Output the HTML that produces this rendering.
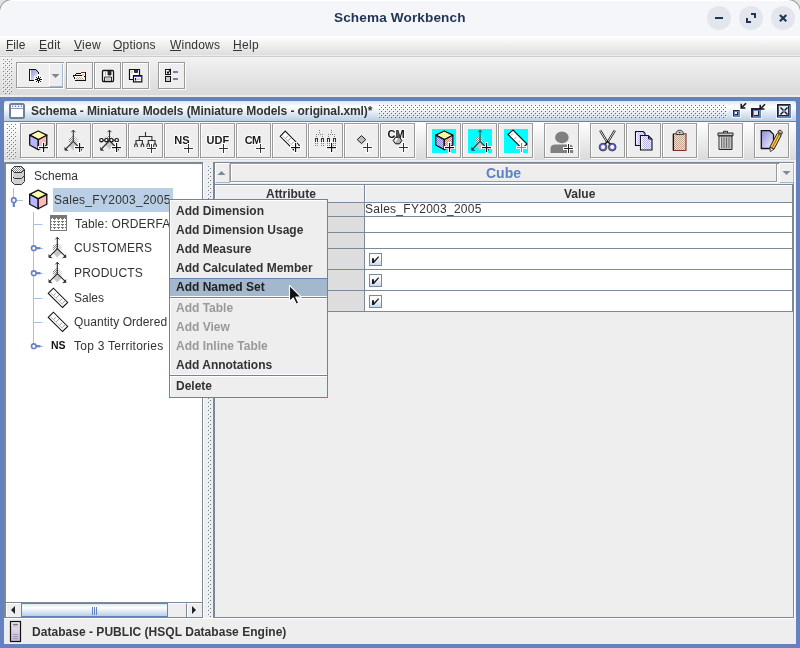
<!DOCTYPE html>
<html><head><meta charset="utf-8">
<style>
*{box-sizing:border-box;margin:0;padding:0}
html,body{width:800px;height:648px;overflow:hidden;background:#6382BF}
body{position:relative;font-family:"Liberation Sans",sans-serif;font-size:12px;color:#333}
.a{position:absolute}
.t{position:absolute;white-space:pre;line-height:1;will-change:transform}
svg{position:absolute;overflow:visible;will-change:transform}
/* window title */
#title{left:-1px;top:-1px;width:802px;height:37px;background:#F4F6FA;border-radius:13px 13px 0 0;border:1px solid #9A9A9A;border-bottom:0;box-shadow:inset 0 1px 0 #fff}
#menubar{left:0;top:36px;width:800px;height:19px;background:linear-gradient(#FFFFFF,#DDDDDD)}
#mtb{left:0;top:57px;width:800px;height:38px;background:linear-gradient(#F2F2F2,#DADADA)}
.tbtn{position:absolute;border:1px solid #999;box-shadow:1px 1px 0 #fff inset,1px 1px 0 #fff;background:#EEEEEE}
.bumps{position:absolute;background-image:radial-gradient(circle at 0.5px 0.5px,#6F8297 0.8px,transparent 0.9px);}
.menu{font-size:12px;color:#333}
.mu{position:absolute;height:1px;background:#333}
</style></head>
<body>
<!-- corners of window: outer area -->
<div class="a" style="left:0;top:0;width:800px;height:97px;background:#EEEEEE"></div>
<div class="a" style="left:0;top:0;width:800px;height:20px;background:#E2E2E2"></div>
<div class="a" id="title"></div>
<div class="t" style="left:334px;top:11px;font-size:13.6px;font-weight:700;color:#1F3553;letter-spacing:0.12px">Schema Workbench</div>
<!-- window buttons -->
<div class="a" style="left:707px;top:6px;width:24px;height:24px;border-radius:12px;background:#E3E6ED"></div>
<div class="a" style="left:739px;top:6px;width:24px;height:24px;border-radius:12px;background:#E3E6ED"></div>
<div class="a" style="left:771px;top:6px;width:24px;height:24px;border-radius:12px;background:#E3E6ED"></div>
<div class="a" style="left:715px;top:17px;width:8px;height:2px;background:#1D3556"></div>
<svg style="left:739px;top:6px" width="24" height="24"><path d="M12 8H16V12M8 12V16H12" fill="none" stroke="#1D3556" stroke-width="2"/></svg>
<svg style="left:771px;top:6px" width="24" height="24"><path d="M8.9 8.9L15.3 15.3M15.3 8.9L8.9 15.3" fill="none" stroke="#1D3556" stroke-width="2.1"/></svg>

<!-- menubar -->
<div class="a" id="menubar"></div>
<div class="a" style="left:0;top:55px;width:800px;height:1px;background:#ECECEC"></div>
<div class="a" style="left:0;top:56px;width:800px;height:1px;background:#CCCCCC"></div>
<div class="t menu" style="left:6px;top:39px">File</div>
<div class="t menu" style="left:39px;top:39px;letter-spacing:0.25px">Edit</div>
<div class="t menu" style="left:74px;top:39px;letter-spacing:0.3px">View</div>
<div class="t menu" style="left:113px;top:39px;letter-spacing:0.2px">Options</div>
<div class="t menu" style="left:170px;top:39px;letter-spacing:0.2px">Windows</div>
<div class="t menu" style="left:233px;top:39px;letter-spacing:0.3px">Help</div>

<div class="a" style="left:6px;top:50px;width:7px;height:1px;background:#333"></div>
<div class="a" style="left:39px;top:50px;width:8px;height:1px;background:#333"></div>
<div class="a" style="left:74px;top:50px;width:8px;height:1px;background:#333"></div>
<div class="a" style="left:113px;top:50px;width:9px;height:1px;background:#333"></div>
<div class="a" style="left:170px;top:50px;width:11px;height:1px;background:#333"></div>
<div class="a" style="left:233px;top:50px;width:9px;height:1px;background:#333"></div>
<!-- main toolbar -->
<div class="a" id="mtb"></div>
<div class="a" style="left:0;top:95px;width:800px;height:2px;background:#ECECEC"></div>
<svg style="left:0;top:0" width="800" height="648">
<defs>
<pattern id="bmpA" x="2" y="58" width="4" height="4" patternUnits="userSpaceOnUse"><rect x="0" y="0" width="1" height="1" fill="#fff"/><rect x="2" y="2" width="1" height="1" fill="#fff"/><rect x="1" y="1" width="1" height="1" fill="#6E7F91"/><rect x="3" y="3" width="1" height="1" fill="#6E7F91"/></pattern>
<pattern id="bmpB" x="6" y="123" width="4" height="4" patternUnits="userSpaceOnUse"><rect x="0" y="0" width="1" height="1" fill="#fff"/><rect x="2" y="2" width="1" height="1" fill="#fff"/><rect x="1" y="1" width="1" height="1" fill="#6E7F91"/><rect x="3" y="3" width="1" height="1" fill="#6E7F91"/></pattern>
<pattern id="bmpC" x="378" y="104" width="4" height="4" patternUnits="userSpaceOnUse"><rect x="0" y="0" width="1" height="1" fill="#fff"/><rect x="2" y="2" width="1" height="1" fill="#fff"/><rect x="1" y="1" width="1" height="1" fill="#5A677A"/><rect x="3" y="3" width="1" height="1" fill="#5A677A"/></pattern>
</defs>
</svg>

<svg style="left:0;top:0" width="800" height="100"><rect x="2" y="58" width="10" height="36" fill="url(#bmpA)"/></svg>
<!-- combo new -->
<div class="a" style="left:16px;top:62px;width:48px;height:26px;border:1px solid #999;border-right-color:#999;background:#EEEEEE;box-shadow:inset 1px 1px 0 #fff"></div>
<div class="a" style="left:17px;top:63px;width:47px;height:26px;border:1px solid #fff;border-width:0 1px 1px 0"></div>
<div class="a" style="left:49px;top:63px;width:14px;height:24px;background:#EEEEEE;border-left:1px solid #fff;border-top:1px solid #fff;border-right:1px solid #A3B8CC;border-bottom:1px solid #A3B8CC"></div>
<svg style="left:0;top:0" width="100" height="100"><path d="M51.5 74h8l-4 4z" fill="#7A8A99"/></svg>
<div class="tbtn" style="left:66px;top:62px;width:27px;height:27px"></div>
<div class="tbtn" style="left:94px;top:62px;width:27px;height:27px"></div>
<div class="tbtn" style="left:122px;top:62px;width:27px;height:27px"></div>
<div class="tbtn" style="left:158px;top:62px;width:27px;height:27px"></div>


<!-- blue internal frame area -->
<div class="a" style="left:0;top:97px;width:800px;height:551px;background:#6382BF"></div>
<!-- internal title -->
<div class="a" style="left:4px;top:101px;width:792px;height:20px;border-radius:2px 2px 0 0;background:linear-gradient(#DDE8F3 0%,#FFFFFF 30%,#B8CFE5 100%)"></div>
<div class="a" style="left:4px;top:121px;width:792px;height:1px;background:#6382BF"></div>
<div class="t" style="left:31px;top:105px;font-size:12px;font-weight:700;color:#333;letter-spacing:-0.09px">Schema - Miniature Models (Miniature Models - original.xml)*</div>

<!-- internal frame title icon & buttons -->
<svg style="left:0;top:0" width="800" height="125">
<rect x="10" y="104" width="14" height="14" rx="1.5" fill="#fff" stroke="#6F8093" stroke-width="2"/>
<path d="M11 108.5H23" stroke="#8C9AAA" stroke-width="1"/>
<circle cx="12.8" cy="106.3" r="0.8" fill="#4A6CC0"/><circle cx="15.6" cy="106.3" r="0.8" fill="#4A6CC0"/><circle cx="18.5" cy="106.3" r="0.8" fill="#4A6CC0"/><circle cx="21.4" cy="106.3" r="0.8" fill="#4A6CC0"/>
<!-- iconify -->
<rect x="732" y="109" width="9" height="9" fill="#fff" opacity="0.7"/>
<rect x="733" y="110" width="7" height="7" fill="#6382BF"/>
<rect x="733" y="110" width="6" height="1" fill="#222"/><rect x="733" y="110" width="1" height="6" fill="#222"/>
<rect x="735" y="112" width="3" height="3" fill="#222"/><rect x="735" y="112" width="2" height="2" fill="#fff"/>
<path d="M746 103.3L742 107.3" stroke="#111" stroke-width="1.6"/><path d="M741.2 103.8V108H745.4" fill="none" stroke="#111" stroke-width="1.5"/>
<!-- maximize -->
<rect x="750" y="107" width="12" height="12" fill="#fff" opacity="0.7"/>
<rect x="751" y="108" width="10" height="10" fill="#6382BF"/>
<rect x="751" y="108" width="9" height="2" fill="#222"/><rect x="751" y="108" width="2" height="9" fill="#222"/>
<rect x="754" y="111" width="5" height="5" fill="#222"/><rect x="754" y="111" width="4" height="4" fill="#DCE6F2"/>
<path d="M765 104.3L761 108.3" stroke="#111" stroke-width="1.6"/><path d="M760.2 104.8V109H764.4" fill="none" stroke="#111" stroke-width="1.5"/>
<!-- close -->
<rect x="776" y="103" width="16" height="16" fill="#fff" opacity="0.7"/>
<rect x="777" y="104" width="14" height="14" fill="#6382BF"/>
<rect x="777" y="104" width="13" height="1.5" fill="#222"/><rect x="777" y="104" width="1.5" height="13" fill="#222"/>
<rect x="779" y="106" width="10" height="10" fill="#222"/><rect x="779" y="106" width="9" height="9" fill="#E8EEF6"/>
<path d="M780.5 107.5L787.5 114.5M787.5 107.5L780.5 114.5" stroke="#111" stroke-width="1.4"/>
<path d="M783 110l2 2M785 110l-2 2" stroke="#6382BF" stroke-width="1"/>
</svg>
<!-- internal toolbar -->
<div class="a" style="left:4px;top:122px;width:792px;height:38px;background:linear-gradient(#FFFFFF,#DADADA)"></div>
<div class="a" style="left:4px;top:160px;width:792px;height:1px;background:#EFEFEF"></div>
<div class="a" style="left:4px;top:161px;width:792px;height:1px;background:#E6E6E6"></div>


<svg style="left:0;top:0" width="800" height="200"><rect x="378" y="104" width="349" height="14" fill="url(#bmpC)"/><rect x="6" y="123" width="10" height="36" fill="url(#bmpB)"/></svg>
<div class="tbtn" style="left:20px;top:123px;width:35px;height:35px"></div>
<div class="tbtn" style="left:56px;top:123px;width:35px;height:35px"></div>
<div class="tbtn" style="left:92px;top:123px;width:35px;height:35px"></div>
<div class="tbtn" style="left:128px;top:123px;width:35px;height:35px"></div>
<div class="tbtn" style="left:164px;top:123px;width:35px;height:35px"></div>
<div class="tbtn" style="left:200px;top:123px;width:35px;height:35px"></div>
<div class="tbtn" style="left:236px;top:123px;width:35px;height:35px"></div>
<div class="tbtn" style="left:272px;top:123px;width:35px;height:35px"></div>
<div class="tbtn" style="left:308px;top:123px;width:35px;height:35px"></div>
<div class="tbtn" style="left:344px;top:123px;width:35px;height:35px"></div>
<div class="tbtn" style="left:380px;top:123px;width:35px;height:35px"></div>
<div class="tbtn" style="left:426px;top:123px;width:35px;height:35px"></div>
<div class="tbtn" style="left:462px;top:123px;width:35px;height:35px"></div>
<div class="tbtn" style="left:498px;top:123px;width:35px;height:35px"></div>
<div class="tbtn" style="left:544px;top:123px;width:35px;height:35px"></div>
<div class="tbtn" style="left:590px;top:123px;width:35px;height:35px"></div>
<div class="tbtn" style="left:626px;top:123px;width:35px;height:35px"></div>
<div class="tbtn" style="left:662px;top:123px;width:35px;height:35px"></div>
<div class="tbtn" style="left:708px;top:123px;width:35px;height:35px"></div>
<div class="tbtn" style="left:754px;top:123px;width:35px;height:35px"></div>
<!-- ICONS -->
<svg style="left:0;top:0" width="800" height="170">
<defs><pattern id="hY" width="2" height="2" patternUnits="userSpaceOnUse"><rect width="2" height="2" fill="#FFFFB0"/><rect width="1" height="1" fill="#E8E890"/></pattern><pattern id="hB" width="2" height="2" patternUnits="userSpaceOnUse"><rect width="2" height="2" fill="#C8C8FF"/><rect width="1" height="1" fill="#8888DD"/><rect x="1" y="1" width="1" height="1" fill="#8888DD"/></pattern><pattern id="hR" width="2" height="2" patternUnits="userSpaceOnUse"><rect width="2" height="2" fill="#FFC8C8"/><rect width="1" height="1" fill="#DD8888"/><rect x="1" y="1" width="1" height="1" fill="#DD8888"/></pattern><pattern id="hL" width="2" height="2" patternUnits="userSpaceOnUse"><rect width="2" height="2" fill="#F2F2FC"/><rect width="1" height="1" fill="#B4B4E4"/><rect x="1" y="1" width="1" height="1" fill="#B4B4E4"/></pattern><pattern id="hT" width="2" height="2" patternUnits="userSpaceOnUse"><rect width="2" height="2" fill="#EADFD2"/><rect width="1" height="1" fill="#C4A890"/><rect x="1" y="1" width="1" height="1" fill="#C4A890"/></pattern><linearGradient id="gL" x1="0" y1="0" x2="1" y2="1"><stop offset="0" stop-color="#8C8CD8"/><stop offset="1" stop-color="#F4F4FF"/></linearGradient></defs>
<g stroke="#111" stroke-width="1.3" stroke-linejoin="round"><path d="M38.3 131L46.8 135.2L38.3 139.7L29.699999999999996 135.2z" fill="#FFFFB0"/><path d="M29.699999999999996 135.2L38.3 139.7V149.6L29.699999999999996 145z" fill="#B8B8FF"/><path d="M46.8 135.2L38.3 139.7V149.6L46.8 145z" fill="#FFB8B8"/></g><rect x="38" y="146" width="11" height="3" fill="#fff"/><rect x="42" y="142" width="3" height="11" fill="#fff"/><rect x="39" y="147" width="9" height="1" fill="#111"/><rect x="43" y="143" width="1" height="9" fill="#111"/><rect x="39" y="147" width="9" height="1" fill="#111" opacity="0.35" transform="translate(0,0.5)"/><rect x="43" y="143" width="1" height="9" fill="#111" opacity="0.35" transform="translate(0.5,0)"/><path d="M73.3 141.3L68.8 143.20000000000002V138.60000000000002L73.3 135.5z" fill="url(#hatch)"/><path d="M73.3 141.3L77.8 143.20000000000002V138.60000000000002L73.3 135.5z" fill="url(#hatch)" opacity="0.45"/><path d="M73.3 141.3l4.3 4.3l-4.3 4.8l-4.3-4.8z" fill="#C8C8C8"/><path d="M73.3 141.3V130.2M73.3 141.3L64.8 150M73.3 141.3L81.8 150" stroke="#333" stroke-width="1.1" fill="none"/><path d="M71.3 132.2l2-2l2 2" stroke="#333" stroke-width="1" fill="none"/><path d="M64.3 146.7l0.5 3.7l3.7 0.5z M82.3 146.7l-0.5 3.7l-3.7 0.5z" fill="#333"/><rect x="74" y="146" width="11" height="3" fill="#fff"/><rect x="78" y="142" width="3" height="11" fill="#fff"/><rect x="75" y="147" width="9" height="1" fill="#111"/><rect x="79" y="143" width="1" height="9" fill="#111"/><rect x="75" y="147" width="9" height="1" fill="#111" opacity="0.35" transform="translate(0,0.5)"/><rect x="79" y="143" width="1" height="9" fill="#111" opacity="0.35" transform="translate(0.5,0)"/><path d="M109.5 140.5L105.0 142.4V137.8L109.5 134.7z" fill="url(#hatch)"/><path d="M109.5 140.5L114.0 142.4V137.8L109.5 134.7z" fill="url(#hatch)" opacity="0.45"/><path d="M109.5 140.5l4.3 4.3l-4.3 4.8l-4.3-4.8z" fill="#C8C8C8"/><path d="M109.5 140.5V130.2M109.5 140.5L100.5 150M109.5 140.5L118.5 150" stroke="#333" stroke-width="1.1" fill="none"/><path d="M107.5 132.2l2-2l2 2" stroke="#333" stroke-width="1" fill="none"/><path d="M100.0 146.7l0.5 3.7l3.7 0.5z M119.0 146.7l-0.5 3.7l-3.7 0.5z" fill="#333"/><path d="M101.4 140.2H116.7" stroke="#111" stroke-width="1"/><circle cx="101.4" cy="140.2" r="1.7" fill="#fff" stroke="#111" stroke-width="1.2"/><circle cx="106.4" cy="140.2" r="1.7" fill="#fff" stroke="#111" stroke-width="1.2"/><circle cx="111.4" cy="140.2" r="1.7" fill="#fff" stroke="#111" stroke-width="1.2"/><circle cx="116.7" cy="140.2" r="1.7" fill="#fff" stroke="#111" stroke-width="1.2"/><rect x="111" y="146" width="11" height="3" fill="#fff"/><rect x="115" y="142" width="3" height="11" fill="#fff"/><rect x="112" y="147" width="9" height="1" fill="#111"/><rect x="116" y="143" width="1" height="9" fill="#111"/><rect x="112" y="147" width="9" height="1" fill="#111" opacity="0.35" transform="translate(0,0.5)"/><rect x="116" y="143" width="1" height="9" fill="#111" opacity="0.35" transform="translate(0.5,0)"/><g stroke="#333" stroke-width="1.1" fill="none"><path d="M145.5 132V136.5M139.3 140.5V136.5H151.9V140.5M136 144V140.5H142.4V144M148.3 144V140.5H155V144"/><path d="M134.7 147V145.2a1.3 1.3 0 0 1 2.6 0V147"/><path d="M141.1 147V145.2a1.3 1.3 0 0 1 2.6 0V147"/><path d="M147.0 147V145.2a1.3 1.3 0 0 1 2.6 0V147"/><path d="M153.7 147V145.2a1.3 1.3 0 0 1 2.6 0V147"/></g><rect x="146" y="147" width="11" height="3" fill="#fff"/><rect x="150" y="143" width="3" height="11" fill="#fff"/><rect x="147" y="148" width="9" height="1" fill="#333"/><rect x="151" y="144" width="1" height="9" fill="#333"/><text x="174.2" y="144" font-family="Liberation Sans" font-weight="700" font-size="11" fill="#1a1a1a" stroke="#fff" stroke-width="1.6" paint-order="stroke">NS</text><rect x="183" y="147" width="11" height="3" fill="#fff"/><rect x="187" y="143" width="3" height="11" fill="#fff"/><rect x="184" y="148" width="9" height="1" fill="#333"/><rect x="188" y="144" width="1" height="9" fill="#333"/><text x="206.6" y="144" font-family="Liberation Sans" font-weight="700" font-size="11" fill="#1a1a1a" stroke="#fff" stroke-width="1.6" paint-order="stroke">UDF</text><rect x="218" y="147" width="11" height="3" fill="#fff"/><rect x="222" y="143" width="3" height="11" fill="#fff"/><rect x="219" y="148" width="9" height="1" fill="#333"/><rect x="223" y="144" width="1" height="9" fill="#333"/><text x="244.8" y="144" font-family="Liberation Sans" font-weight="700" font-size="11" fill="#1a1a1a" stroke="#fff" stroke-width="1.6" paint-order="stroke" textLength="16.4">CM</text><rect x="255" y="147" width="11" height="3" fill="#fff"/><rect x="259" y="143" width="3" height="11" fill="#fff"/><rect x="256" y="148" width="9" height="1" fill="#333"/><rect x="260" y="144" width="1" height="9" fill="#333"/><path d="M280.10 136.30L285.20 131.10L299.50 145.40L294.30 150.40z" fill="#fff" stroke="#fff" stroke-width="2.6"/><path d="M280.10 136.30L285.20 131.10L299.50 145.40L294.30 150.40z" fill="#fff" stroke="#111" stroke-width="1.05"/><path d="M282.60 135.90L294.40 147.50" stroke="#888" stroke-width="0.9" stroke-dasharray="1 0.6"/><path d="M285.60 138.40L287.60 136.20M288.00 140.80L290.80 137.90M291.80 143.90L293.80 141.80M294.10 146.30L296.80 143.70" stroke="#888" stroke-width="0.9"/><rect x="293" y="149" width="1" height="1" fill="#111"/><rect x="290" y="146" width="11" height="3" fill="#fff"/><rect x="294" y="142" width="3" height="11" fill="#fff"/><rect x="291" y="147" width="9" height="1" fill="#111"/><rect x="295" y="143" width="1" height="9" fill="#111"/><rect x="291" y="147" width="9" height="1" fill="#111" opacity="0.35" transform="translate(0,0.5)"/><rect x="295" y="143" width="1" height="9" fill="#111" opacity="0.35" transform="translate(0.5,0)"/><g fill="#808080"><rect x="319" y="130" width="1" height="1"/><rect x="319" y="132" width="1" height="1"/><rect x="316" y="134" width="1" height="1"/><rect x="318" y="134" width="1" height="1"/><rect x="320" y="134" width="1" height="1"/><rect x="322" y="134" width="1" height="1"/><rect x="316" y="136" width="1" height="1"/><rect x="322" y="136" width="1" height="1"/><rect x="315" y="143" width="1" height="1"/><rect x="317" y="143" width="1" height="1"/><rect x="315" y="145" width="1" height="1"/><rect x="317" y="145" width="1" height="1"/><rect x="321" y="143" width="1" height="1"/><rect x="323" y="143" width="1" height="1"/><rect x="321" y="145" width="1" height="1"/><rect x="323" y="145" width="1" height="1"/><rect x="331" y="130" width="1" height="1"/><rect x="331" y="132" width="1" height="1"/><rect x="328" y="134" width="1" height="1"/><rect x="330" y="134" width="1" height="1"/><rect x="332" y="134" width="1" height="1"/><rect x="334" y="134" width="1" height="1"/><rect x="328" y="136" width="1" height="1"/><rect x="334" y="136" width="1" height="1"/><rect x="327" y="143" width="1" height="1"/><rect x="329" y="143" width="1" height="1"/><rect x="327" y="145" width="1" height="1"/><rect x="329" y="145" width="1" height="1"/><rect x="333" y="143" width="1" height="1"/><rect x="335" y="143" width="1" height="1"/><rect x="333" y="145" width="1" height="1"/><rect x="335" y="145" width="1" height="1"/></g><g fill="#333"><rect x="315" y="138" width="3" height="1"/><rect x="315" y="139" width="1" height="3"/><rect x="317" y="139" width="1" height="3"/><rect x="321" y="138" width="3" height="1"/><rect x="321" y="139" width="1" height="3"/><rect x="323" y="139" width="1" height="3"/><rect x="327" y="138" width="3" height="1"/><rect x="327" y="139" width="1" height="3"/><rect x="329" y="139" width="1" height="3"/><rect x="333" y="138" width="3" height="1"/><rect x="333" y="139" width="1" height="3"/><rect x="335" y="139" width="1" height="3"/></g><rect x="326" y="146" width="11" height="3" fill="#fff"/><rect x="330" y="142" width="3" height="11" fill="#fff"/><rect x="327" y="147" width="9" height="1" fill="#111"/><rect x="331" y="143" width="1" height="9" fill="#111"/><rect x="327" y="147" width="9" height="1" fill="#111" opacity="0.35" transform="translate(0,0.5)"/><rect x="331" y="143" width="1" height="9" fill="#111" opacity="0.35" transform="translate(0.5,0)"/><path d="M361.5 135.6L365.8 139.6L361.5 143.6L357.2 139.6z" fill="#BBBBBB" stroke="#222" stroke-width="1" stroke-linejoin="round"/><rect x="362" y="146" width="11" height="3" fill="#fff"/><rect x="366" y="142" width="3" height="11" fill="#fff"/><rect x="363" y="147" width="9" height="1" fill="#333"/><rect x="367" y="143" width="1" height="9" fill="#333"/><text x="387.6" y="137.8" font-family="Liberation Sans" font-weight="700" font-size="11" fill="#111" stroke="#fff" stroke-width="1.4" paint-order="stroke">CM</text><path d="M395.5 137.2H399.5L401.8 140.5L399.5 143.8H395.5L393.2 140.5z" fill="#B4B4B4" stroke="#111" stroke-width="1" stroke-linejoin="round"/><path d="M395.8 138L398 138L396 141.5H394.2z" fill="#fff"/><path d="M397 130.5L399.3 137.5" stroke="#555" stroke-width="1.6"/><rect x="398" y="146" width="11" height="3" fill="#fff"/><rect x="402" y="142" width="3" height="11" fill="#fff"/><rect x="399" y="147" width="9" height="1" fill="#333"/><rect x="403" y="143" width="1" height="9" fill="#333"/><rect x="432" y="129" width="24" height="24" fill="#00FFFF"/><rect x="468" y="129" width="24" height="24" fill="#00FFFF"/><rect x="504" y="129" width="24" height="24" fill="#00FFFF"/><g stroke="#111" stroke-width="1.3" stroke-linejoin="round"><path d="M444.3 131L452.8 135.2L444.3 139.7L435.7 135.2z" fill="url(#hY)"/><path d="M435.7 135.2L444.3 139.7V149.6L435.7 145z" fill="url(#hB)"/><path d="M452.8 135.2L444.3 139.7V149.6L452.8 145z" fill="url(#hR)"/></g><rect x="444" y="146" width="11" height="3" fill="#fff"/><rect x="448" y="142" width="3" height="11" fill="#fff"/><rect x="445" y="147" width="9" height="1" fill="#111"/><rect x="449" y="143" width="1" height="9" fill="#111"/><rect x="445" y="147" width="9" height="1" fill="#111" opacity="0.35" transform="translate(0,0.5)"/><rect x="449" y="143" width="1" height="9" fill="#111" opacity="0.35" transform="translate(0.5,0)"/><path d="M480 141.3L475.5 143.20000000000002V138.60000000000002L480 135.5z" fill="url(#hatch)"/><path d="M480 141.3L484.5 143.20000000000002V138.60000000000002L480 135.5z" fill="url(#hatch)" opacity="0.45"/><path d="M480 141.3l4.3 4.3l-4.3 4.8l-4.3-4.8z" fill="#C8C8C8"/><path d="M480 141.3V130.2M480 141.3L471.5 150M480 141.3L488.5 150" stroke="#333" stroke-width="1.1" fill="none"/><path d="M478 132.2l2-2l2 2" stroke="#333" stroke-width="1" fill="none"/><path d="M471.0 146.7l0.5 3.7l3.7 0.5z M489.0 146.7l-0.5 3.7l-3.7 0.5z" fill="#333"/><rect x="481" y="146" width="11" height="3" fill="#fff"/><rect x="485" y="142" width="3" height="11" fill="#fff"/><rect x="482" y="147" width="9" height="1" fill="#111"/><rect x="486" y="143" width="1" height="9" fill="#111"/><rect x="482" y="147" width="9" height="1" fill="#111" opacity="0.35" transform="translate(0,0.5)"/><rect x="486" y="143" width="1" height="9" fill="#111" opacity="0.35" transform="translate(0.5,0)"/><path d="M508 134.5L513 130L527 144L522 148.5z" fill="#fff" stroke="#111" stroke-width="1.1"/><path d="M511 135.5l2-2M514.5 139l2-2M518 142.5l2-2" stroke="#999" stroke-width="0.9"/><rect x="516" y="146" width="11" height="3" fill="#fff"/><rect x="520" y="142" width="3" height="11" fill="#fff"/><rect x="517" y="147" width="9" height="1" fill="#888"/><rect x="521" y="143" width="1" height="9" fill="#888"/><ellipse cx="561.9" cy="137.4" rx="6.8" ry="5.8" fill="#808080"/><path d="M550.5 153V148.5Q550.5 144.5 555.5 144.5H568.5Q573.2 144.5 573.2 148.5V153z" fill="#808080"/><rect x="563" y="147" width="11" height="3" fill="#fff"/><rect x="567" y="143" width="3" height="11" fill="#fff"/><rect x="564" y="148" width="9" height="1" fill="#222"/><rect x="568" y="144" width="1" height="9" fill="#222"/><path d="M600.2 130.5L607.5 142.5M614.8 130.5L607.5 142.5" stroke="#111" stroke-width="2.4"/><path d="M600.2 130.5L607.5 142.5M614.8 130.5L607.5 142.5" stroke="#fff" stroke-width="0.9"/><path d="M607.5 141.5L604 145M607.5 141.5L611.2 145" stroke="#111" stroke-width="1.5"/><circle cx="603" cy="147.1" r="2.8" fill="#fff" stroke="#6666CC" stroke-width="1.6"/><circle cx="612.2" cy="147.1" r="2.8" fill="#fff" stroke="#6666CC" stroke-width="1.6"/><circle cx="603" cy="147.1" r="3.9" fill="none" stroke="#111" stroke-width="0.7"/><circle cx="612.2" cy="147.1" r="3.9" fill="none" stroke="#111" stroke-width="0.7"/><path d="M635.5 131.5H643.2L645 133.3V145.5H635.5z" fill="url(#hL)" stroke="#111" stroke-width="1.1"/><path d="M636.8 132.5V144.5" stroke="#fff" stroke-width="1"/><path d="M640.5 135.5H648.2L652 139.3V150H640.5z" fill="url(#hL)" stroke="#111" stroke-width="1.1"/><path d="M641.8 136.5V149" stroke="#fff" stroke-width="1"/><path d="M648.5 135.8V139H651.7" fill="none" stroke="#111" stroke-width="1"/><path d="M673.5 133.8H686V150.5H673.5z" fill="url(#hT)" stroke="#803030" stroke-width="1.1"/><path d="M673.3 134V150.5" stroke="#111" stroke-width="1.2"/><path d="M676 134.5Q676 130.2 679.7 130.2Q683.4 130.2 683.4 134.5z" fill="#C8C8C8" stroke="#333" stroke-width="0.9"/><circle cx="679.7" cy="132.5" r="0.8" fill="#333"/><path d="M718 133H733V135.8H718z" fill="#C8C8C8" stroke="#222" stroke-width="1"/><path d="M723.5 133V131.3H727.5V133" fill="none" stroke="#222" stroke-width="1"/><path d="M719 136H732V149.5H719z" fill="#BDBDBD" stroke="#222" stroke-width="1"/><path d="M721.5 137.5V148" stroke="#666" stroke-width="0.9"/><path d="M724 137.5V148" stroke="#666" stroke-width="0.9"/><path d="M726.5 137.5V148" stroke="#666" stroke-width="0.9"/><path d="M729 137.5V148" stroke="#666" stroke-width="0.9"/><path d="M720.2 137V148.5" stroke="#fff" stroke-width="0.8"/><path d="M761.3 130.7H769.8L773.5 134.4V148.5H761.3z" fill="url(#gL)" stroke="#111" stroke-width="1.3"/><path d="M769.9 147.1L773.9 149.3L781.2 135.5L777.2 133.4z" fill="#E8D040" stroke="#222" stroke-width="1"/><path d="M771.9 148.2L779.2 134.5" stroke="#D04848" stroke-width="1"/><path d="M777.2 133.4L781.2 135.5L781.9 134.2L777.9 132.1z" fill="#40A040"/><path d="M777.9 132.1L781.9 134.2Q783.2 131.5 780.8 130.3Q778.6 129.4 777.9 132.1z" fill="#F0A8A8" stroke="#222" stroke-width="0.9"/><path d="M769.9 147.1L773.9 149.3L770.3 151.6z" fill="#F4E4C8" stroke="#222" stroke-width="0.8"/><path d="M30 70H36L38 72V80H30z" fill="url(#gL)"/><rect x="30" y="70" width="1" height="10" fill="#fff"/><rect x="29" y="69" width="7" height="1" fill="#111"/><rect x="29" y="69" width="1" height="12" fill="#111"/><rect x="29" y="80" width="5" height="1" fill="#111"/><rect x="36" y="70" width="1" height="1" fill="#111"/><rect x="37" y="71" width="1" height="1" fill="#111"/><rect x="38" y="72" width="1" height="2" fill="#111"/><rect x="36" y="69" width="1" height="1" fill="#ccc"/><rect x="37" y="70" width="1" height="1" fill="#B8B8F0"/><path d="M34 76.5h2.5v-2h4v2h2.5v5h-2.5v2h-4v-2h-2.5z" fill="#fff"/><rect x="38" y="76" width="1" height="1" fill="#111"/><rect x="38" y="77" width="1" height="1" fill="#111"/><rect x="38" y="78" width="1" height="1" fill="#111"/><rect x="38" y="80" width="1" height="1" fill="#111"/><rect x="38" y="81" width="1" height="1" fill="#111"/><rect x="38" y="82" width="1" height="1" fill="#111"/><rect x="35" y="79" width="1" height="1" fill="#111"/><rect x="36" y="79" width="1" height="1" fill="#111"/><rect x="37" y="79" width="1" height="1" fill="#111"/><rect x="39" y="79" width="1" height="1" fill="#111"/><rect x="40" y="79" width="1" height="1" fill="#111"/><rect x="41" y="79" width="1" height="1" fill="#111"/><rect x="36" y="77" width="1" height="1" fill="#111"/><rect x="37" y="78" width="1" height="1" fill="#111"/><rect x="39" y="78" width="1" height="1" fill="#111"/><rect x="40" y="77" width="1" height="1" fill="#111"/><rect x="36" y="81" width="1" height="1" fill="#111"/><rect x="37" y="80" width="1" height="1" fill="#111"/><rect x="39" y="80" width="1" height="1" fill="#111"/><rect x="40" y="81" width="1" height="1" fill="#111"/><rect x="76" y="73" width="5" height="1" fill="#111"/><rect x="73" y="75" width="11" height="1" fill="#111"/><rect x="75" y="74" width="1" height="1" fill="#111"/><rect x="73" y="76" width="1" height="1" fill="#111"/><rect x="74" y="77" width="1" height="2" fill="#111"/><rect x="75" y="79" width="1" height="2" fill="#111"/><rect x="75" y="80" width="11" height="1" fill="#111"/><rect x="85" y="72" width="1" height="9" fill="#111"/><rect x="84" y="76" width="1" height="1" fill="#111"/><rect x="83" y="75" width="1" height="1" fill="#111"/><rect x="81" y="72" width="4" height="1" fill="#802828"/><rect x="81" y="73" width="4" height="2" fill="#fff"/><rect x="82" y="74" width="2" height="2" fill="#E8C8A0"/><rect x="74" y="76" width="10" height="1" fill="#fff"/><rect x="75" y="77" width="9" height="3" fill="#fff"/><rect x="76" y="78" width="1" height="1" fill="#D8B088"/><rect x="78" y="78" width="1" height="1" fill="#D8B088"/><rect x="80" y="78" width="1" height="1" fill="#D8B088"/><rect x="82" y="78" width="1" height="1" fill="#D8B088"/><rect x="77" y="79" width="1" height="1" fill="#D8B088"/><rect x="79" y="79" width="1" height="1" fill="#D8B088"/><rect x="81" y="79" width="1" height="1" fill="#D8B088"/><rect x="83" y="79" width="1" height="1" fill="#D8B088"/><rect x="77" y="77" width="1" height="1" fill="#D8B088"/><rect x="79" y="77" width="1" height="1" fill="#D8B088"/><rect x="81" y="77" width="1" height="1" fill="#D8B088"/><rect x="76" y="79" width="8" height="1" fill="#F0D8B8" opacity="0.6"/><path d="M102.5 71.5Q102.5 70.5 103.5 70.5H112.5Q113.5 70.5 113.5 71.5V80.5Q113.5 81.5 112.5 81.5H103.5Q102.5 81.5 102.5 80.5z" fill="#fff" stroke="#111" stroke-width="1.3"/><path d="M108 71V75H111V71" fill="#333" stroke="#111" stroke-width="0.8"/><rect x="105" y="71.5" width="1" height="4" fill="#aaa"/><path d="M104.5 81V77H111.5V81" fill="none" stroke="#111" stroke-width="0.9"/><rect x="105.5" y="78.3" width="5" height="1.6" fill="#bbb"/><path d="M129.5 69.5H139.5V79.5H129.5z" fill="#fff" stroke="#111" stroke-width="1.2"/><path d="M134.5 69.8V72.5H137.5V69.8" fill="#333" stroke="#111" stroke-width="0.8"/><rect x="131.5" y="70.5" width="1" height="3" fill="#aaa"/><path d="M133.5 75.5H141.8V81.8H133.5z" fill="#fff" stroke="#111" stroke-width="1.2"/><path d="M134 76.4H141.5" stroke="#333399" stroke-width="1"/><rect x="135" y="78" width="1.2" height="2.5" fill="#111"/><rect x="136.8" y="78.5" width="3.5" height="1.5" fill="#bbb"/><rect x="165.5" y="69.5" width="5" height="5" fill="#fff" stroke="#111" stroke-width="1"/><path d="M167 71.5L168 73.5L170.5 68.8" stroke="#111" stroke-width="1.2" fill="none"/><rect x="165.5" y="76.5" width="5" height="5" fill="#ccc" stroke="#111" stroke-width="1"/><path d="M173 72H178M173 79H178" stroke="#555599" stroke-width="1.5"/></svg>
<!-- /ICONS -->
<!-- content area -->
<div class="a" style="left:4px;top:162px;width:792px;height:457px;background:#EEEEEE"></div>
<!-- tree scroll pane -->
<div class="a" style="left:4px;top:162px;width:199px;height:456px;border:1px solid #7A8A99;box-shadow:1px 1px 0 #fff"></div>
<div class="a" style="left:5px;top:163px;width:197px;height:454px;border-left:1px solid #7A8A99;border-top:1px solid #7A8A99;background:#fff"></div>
<!-- h scrollbar -->
<div class="a" style="left:6px;top:602px;width:196px;height:1px;background:#7A8A99"></div>
<div class="a" style="left:6px;top:603px;width:196px;height:14px;background:#EEEEEE"></div>
<div class="a" style="left:6px;top:603px;width:15px;height:14px;border-left:1px solid #fff;border-top:1px solid #fff"></div>
<div class="a" style="left:21px;top:603px;width:147px;height:14px;border:1px solid #6382BF;background:linear-gradient(#DDE8F3 0%,#FFFFFF 30%,#B8CFE5 100%)"></div>
<div class="a" style="left:168px;top:603px;width:18px;height:14px;border-top:1px solid #fff"></div>
<div class="a" style="left:186px;top:603px;width:16px;height:14px;border-left:1px solid #7A8A99;border-top:1px solid #fff"></div>
<div class="a" style="left:187px;top:604px;width:14px;height:13px;border-left:1px solid #fff"></div>
<svg style="left:0;top:0" width="210" height="640"><path d="M11 610l4-4v8z" fill="#222"/><path d="M196 610l-4-4v8z" fill="#222"/>
<rect x="92" y="607" width="1" height="8" fill="#6382BF"/><rect x="94" y="607" width="1" height="8" fill="#6382BF"/><rect x="96" y="607" width="1" height="8" fill="#6382BF"/></svg>
<!-- divider -->
<svg style="left:0;top:0" width="220" height="640"><defs><pattern id="bmpD" x="207" y="161" width="4" height="4" patternUnits="userSpaceOnUse"><rect x="0" y="0" width="1" height="1" fill="#fff"/><rect x="2" y="2" width="1" height="1" fill="#fff"/><rect x="1" y="1" width="1" height="1" fill="#6E7F91"/><rect x="3" y="3" width="1" height="1" fill="#6E7F91"/></pattern></defs><rect x="207" y="166" width="4" height="451" fill="url(#bmpD)"/></svg>
<!-- right pane -->
<div class="a" style="left:213px;top:162px;width:581px;height:456px;border:1px solid #7A8A99;box-shadow:1px 1px 0 #fff"></div>
<div class="a" style="left:214px;top:163px;width:579px;height:454px;border-left:1px solid #7A8A99;border-top:1px solid #7A8A99"></div>

<!-- tree -->
<div class="a" style="left:53px;top:188px;width:120px;height:24px;background:#B8CFE5"></div>
<svg style="left:0;top:0" width="210" height="400">
<defs>
<pattern id="hatch" x="0" y="0" width="2" height="2" patternUnits="userSpaceOnUse"><rect width="2" height="2" fill="#fff"/><rect width="1" height="1" fill="#888"/><rect x="1" y="1" width="1" height="1" fill="#888"/></pattern>
</defs>
<!-- tree lines -->
<path d="M13.5 188v10M16 200.5h7M33.5 212v134M33.5 224.5h9M36 248.5h7M36 273.5h7M33.5 298.5h9M33.5 322.5h9M36 346.5h7" stroke="#A9C1E0" stroke-width="1" fill="none"/>
<!-- handles -->
<g stroke="#6382BF" fill="#fff" stroke-width="1.6">
<circle cx="13.8" cy="200.2" r="2.3"/><path d="M13.8 202.5v4.5" stroke-width="2.2"/>
<circle cx="33.8" cy="248.2" r="2.3"/><path d="M36 248.2h4.5" stroke-width="2.2"/>
<circle cx="33.8" cy="273.2" r="2.3"/><path d="M36 273.2h4.5" stroke-width="2.2"/>
<circle cx="33.8" cy="346.2" r="2.3"/><path d="M36 346.2h4.5" stroke-width="2.2"/>
</g>
<!-- schema db icon -->
<g stroke="#333" stroke-width="1" fill="#C8C8C8">
<path d="M14.5 166.5h7l3 3v12l-3 3h-7l-3-3v-12z" fill="#D0D0D0"/>
<path d="M11.5 169.5l3 3h7l3-3" fill="none"/>
<path d="M14.5 166.5h7l3 3-3 3h-7l-3-3z" fill="url(#hatch)"/>
<path d="M11.5 175.5l3 3h7l3-3" fill="none"/>
<path d="M12.5 171v10M12.5 178v3" stroke="#fff" fill="none"/>
</g>
<!-- cube icon -->
<g stroke="#111" stroke-width="1.3" stroke-linejoin="round">
<path d="M38.2 190.2L46.8 194.4L38.2 198.9L29.7 194.4z" fill="#FFFFB0"/>
<path d="M29.7 194.4L38.2 198.9V208.8L29.7 204.2z" fill="#B8B8FF"/>
<path d="M46.8 194.4L38.2 198.9V208.8L46.8 204.2z" fill="#FFB8B8"/>
</g>
<!-- table icon -->
<rect x="50.5" y="215.5" width="16" height="15" fill="#fff" stroke="#777"/>
<rect x="50" y="215" width="17" height="3" fill="#777"/>
<g fill="#777">
<rect x="51" y="218" width="1" height="1"/><rect x="65" y="218" width="1" height="1"/>
<rect x="53" y="218" width="3" height="1"/><rect x="54" y="219" width="1" height="1"/>
<rect x="57" y="218" width="3" height="1"/><rect x="58" y="219" width="1" height="1"/>
<rect x="61" y="218" width="3" height="1"/><rect x="62" y="219" width="1" height="1"/>
<rect x="51" y="221" width="1" height="1"/><rect x="65" y="221" width="1" height="1"/><rect x="53" y="221" width="3" height="1"/><rect x="54" y="222" width="1" height="1"/><rect x="57" y="221" width="3" height="1"/><rect x="58" y="222" width="1" height="1"/><rect x="61" y="221" width="3" height="1"/><rect x="62" y="222" width="1" height="1"/><rect x="51" y="224" width="1" height="1"/><rect x="65" y="224" width="1" height="1"/><rect x="53" y="224" width="3" height="1"/><rect x="54" y="225" width="1" height="1"/><rect x="57" y="224" width="3" height="1"/><rect x="58" y="225" width="1" height="1"/><rect x="61" y="224" width="3" height="1"/><rect x="62" y="225" width="1" height="1"/><rect x="51" y="227" width="1" height="1"/><rect x="65" y="227" width="1" height="1"/><rect x="53" y="227" width="3" height="1"/><rect x="54" y="228" width="1" height="1"/><rect x="57" y="227" width="3" height="1"/><rect x="58" y="228" width="1" height="1"/><rect x="61" y="227" width="3" height="1"/><rect x="62" y="228" width="1" height="1"/>
</g>
</svg>
<svg style="left:0;top:0" width="210" height="400">
<path d="M57.3 248.6L52.8 250.5V245.9L57.3 242.79999999999998z" fill="url(#hatch)"/>
<path d="M57.3 248.6L61.8 250.5V245.9L57.3 242.79999999999998z" fill="url(#hatch)" opacity="0.45"/>
<path d="M57.3 248.6l4.5 4.5l-4.5 4.5l-4.5-4.5z" fill="#C8C8C8"/>
<path d="M57.3 248.6V237.1M57.3 248.6L48.8 257.3M57.3 248.6L66.3 257.3" stroke="#222" stroke-width="1.1" fill="none"/>
<path d="M55.3 239.4l2-2l2 2" stroke="#333" stroke-width="1" fill="none"/><path d="M48.3 254.1l0.5 3.7l3.7 0.5z M66.3 254.1l-0.5 3.7l-3.7 0.5z" fill="#333"/>
</svg>
<svg style="left:0;top:0" width="210" height="400">
<path d="M57.3 273.6L52.8 275.5V270.90000000000003L57.3 267.8z" fill="url(#hatch)"/>
<path d="M57.3 273.6L61.8 275.5V270.90000000000003L57.3 267.8z" fill="url(#hatch)" opacity="0.45"/>
<path d="M57.3 273.6l4.5 4.5l-4.5 4.5l-4.5-4.5z" fill="#C8C8C8"/>
<path d="M57.3 273.6V262.1M57.3 273.6L48.8 282.3M57.3 273.6L66.3 282.3" stroke="#222" stroke-width="1.1" fill="none"/>
<path d="M55.3 264.40000000000003l2-2l2 2" stroke="#333" stroke-width="1" fill="none"/><path d="M48.3 279.1l0.5 3.7l3.7 0.5z M66.3 279.1l-0.5 3.7l-3.7 0.5z" fill="#333"/>
</svg>
<svg style="left:0;top:0" width="210" height="400">
<path d="M48.3 293.4L53.4 288.2L67.7 302.5L62.5 307.5z" fill="#fff" stroke="#111" stroke-width="1.05"/><path d="M50.8 293.0L62.6 304.6" stroke="#888" stroke-width="0.9" stroke-dasharray="1 0.6"/><path d="M53.8 295.5L55.8 293.3M56.2 297.9L59 295.0M60 301.0L62 298.9M62.3 303.4L65 300.8" stroke="#888" stroke-width="0.9"/>
</svg>
<svg style="left:0;top:0" width="210" height="400">
<path d="M48.3 317.4L53.4 312.2L67.7 326.5L62.5 331.5z" fill="#fff" stroke="#111" stroke-width="1.05"/><path d="M50.8 317.0L62.6 328.6" stroke="#888" stroke-width="0.9" stroke-dasharray="1 0.6"/><path d="M53.8 319.5L55.8 317.3M56.2 321.9L59 319.0M60 325.0L62 322.9M62.3 327.4L65 324.8" stroke="#888" stroke-width="0.9"/>
</svg>
<div class="t" style="left:34px;top:170px">Schema</div>
<div class="t" style="left:54px;top:194px;letter-spacing:0.27px">Sales_FY2003_2005</div>
<div class="t" style="left:74.5px;top:218px;letter-spacing:0.15px">Table: ORDERFACT</div>
<div class="t" style="left:74px;top:242px;letter-spacing:0.2px">CUSTOMERS</div>
<div class="t" style="left:74px;top:267px;letter-spacing:0.22px">PRODUCTS</div>
<div class="t" style="left:74px;top:292px">Sales</div>
<div class="t" style="left:74px;top:316px;letter-spacing:0.07px">Quantity Ordered</div>
<div class="t" style="left:74px;top:340px;letter-spacing:0.25px">Top 3 Territories</div>
<div class="t" style="left:50.5px;top:340px;font-size:10.5px;font-weight:700;color:#111">NS</div>
<!-- right pane contents -->
<div class="a" style="left:215px;top:163px;width:15px;height:20px;background:#EEEEEE;border-left:1px solid #fff;border-top:1px solid #fff;border-right:1px solid #A3B8CC;border-bottom:1px solid #A3B8CC"></div>
<div class="a" style="left:230px;top:163px;width:547px;height:19px;border:1px solid #999;box-shadow:1px 1px 0 #fff, inset 1px 1px 0 #fff;background:#EEEEEE"></div>
<div class="a" style="left:779px;top:163px;width:15px;height:20px;background:#EEEEEE;border-left:1px solid #fff;border-top:1px solid #fff;border-right:1px solid #A3B8CC;border-bottom:1px solid #A3B8CC"></div>
<svg style="left:0;top:0" width="800" height="200"><path d="M217.5 175h8l-4-4z" fill="#7A8A99"/><path d="M782.5 171h8l-4 4z" fill="#7A8A99"/></svg>
<div class="t" style="left:486px;top:166px;font-size:14px;font-weight:700;color:#5F80C2">Cube</div>
<!-- table -->
<div class="a" style="left:214px;top:184px;width:580px;height:1px;background:#7A8A99"></div>
<div class="a" style="left:215px;top:185px;width:577px;height:17px;background:#EEEEEE;border-top:1px solid #fff"></div>
<div class="a" style="left:215px;top:185px;width:1px;height:17px;background:#fff"></div>
<div class="a" style="left:365px;top:185px;width:1px;height:17px;background:#fff"></div>
<div class="t" style="left:266px;top:188px;font-weight:700;letter-spacing:-0.02px">Attribute</div>
<div class="t" style="left:564px;top:188px;font-weight:700">Value</div>
<!-- rows -->
<div class="a" style="left:215px;top:203px;width:149px;height:108px;background:#DDDDDD"></div>
<div class="a" style="left:365px;top:203px;width:427px;height:108px;background:#FFFFFF"></div>
<div class="a" style="left:215px;top:202px;width:577px;height:1px;background:#7A8A99"></div>
<div class="a" style="left:215px;top:216px;width:577px;height:1px;background:#7A8A99"></div>
<div class="a" style="left:215px;top:232px;width:577px;height:1px;background:#7A8A99"></div>
<div class="a" style="left:215px;top:248px;width:577px;height:1px;background:#7A8A99"></div>
<div class="a" style="left:215px;top:269px;width:577px;height:1px;background:#7A8A99"></div>
<div class="a" style="left:215px;top:290px;width:577px;height:1px;background:#7A8A99"></div>
<div class="a" style="left:215px;top:311px;width:577px;height:1px;background:#7A8A99"></div>
<div class="a" style="left:364px;top:185px;width:1px;height:127px;background:#7A8A99"></div>
<div class="a" style="left:792px;top:185px;width:2px;height:127px;background:#7A8A99"></div>
<div class="t" style="left:365.3px;top:203px;letter-spacing:0.27px">Sales_FY2003_2005</div>
<div class="a" style="left:369px;top:253px;width:13px;height:13px;border:1px solid #7A8A99;background:linear-gradient(#F4F8FC,#FFFFFF 30%,#C6DAEE)"></div>
<svg style="left:369px;top:253px" width="13" height="13"><path d="M3 5.2h2v2.6L9.3 3.2l0.9 0.9L5 10h-2z" fill="#1A1A1A"/></svg>
<div class="a" style="left:369px;top:274px;width:13px;height:13px;border:1px solid #7A8A99;background:linear-gradient(#F4F8FC,#FFFFFF 30%,#C6DAEE)"></div>
<svg style="left:369px;top:274px" width="13" height="13"><path d="M3 5.2h2v2.6L9.3 3.2l0.9 0.9L5 10h-2z" fill="#1A1A1A"/></svg>
<div class="a" style="left:369px;top:295px;width:13px;height:13px;border:1px solid #7A8A99;background:linear-gradient(#F4F8FC,#FFFFFF 30%,#C6DAEE)"></div>
<svg style="left:369px;top:295px" width="13" height="13"><path d="M3 5.2h2v2.6L9.3 3.2l0.9 0.9L5 10h-2z" fill="#1A1A1A"/></svg>
<!-- status bar -->
<div class="a" style="left:4px;top:619px;width:792px;height:25px;background:#EEEEEE"></div>
<div class="a" style="left:4px;top:618px;width:792px;height:1px;background:#FFFFFF"></div>
<div class="t" style="left:32px;top:626px;font-size:12px;font-weight:700;color:#333;letter-spacing:0.03px">Database - PUBLIC (HSQL Database Engine)</div>

<!-- status icon -->
<svg style="left:0;top:0" width="40" height="648">
<defs><linearGradient id="gS" x1="0" y1="0" x2="0" y2="1"><stop offset="0" stop-color="#E8E8EE"/><stop offset="1" stop-color="#C8B8D8"/></linearGradient></defs>
<rect x="10.5" y="621.5" width="10" height="20" fill="url(#gS)" stroke="#111" stroke-width="1.2"/>
<path d="M13 624.5H18" stroke="#777" stroke-width="1.2"/><path d="M13 626H18" stroke="#aaa" stroke-width="0.8"/>
<path d="M13 634.5H18M13 636.5H18M13 638.5H18" stroke="#9A8AAA" stroke-width="0.8"/>
</svg>
<!-- popup menu -->
<div class="a" style="left:169px;top:199px;width:159px;height:199px;background:#EEEEEE;border:1px solid #6382BF"></div>
<div class="a" style="left:170px;top:200px;width:1px;height:196px;background:#fff"></div>
<div class="a" style="left:170px;top:200px;width:156px;height:1px;background:#fff"></div>
<div class="a" style="left:170px;top:278px;width:157px;height:1px;background:#6A82B2"></div>
<div class="a" style="left:170px;top:279px;width:157px;height:17px;background:#A3B8CC"></div>
<div class="a" style="left:170px;top:296px;width:157px;height:1px;background:#FAFCFF"></div>
<div class="a" style="left:170px;top:297px;width:157px;height:1px;background:#6A82B2"></div>
<div class="a" style="left:170px;top:298px;width:157px;height:1px;background:#fff"></div>
<div class="a" style="left:170px;top:374px;width:157px;height:1px;background:#FAFCFF"></div>
<div class="a" style="left:170px;top:375px;width:157px;height:1px;background:#6382BF"></div>
<div class="a" style="left:170px;top:376px;width:157px;height:1px;background:#fff"></div>
<div class="t" style="left:176px;top:205px;font-weight:700;color:#333">Add Dimension</div>
<div class="t" style="left:176px;top:224px;font-weight:700;color:#333">Add Dimension Usage</div>
<div class="t" style="left:176px;top:243px;font-weight:700;color:#333">Add Measure</div>
<div class="t" style="left:176px;top:262px;font-weight:700;color:#333">Add Calculated Member</div>
<div class="t" style="left:176px;top:281px;font-weight:700;color:#222">Add Named Set</div>
<div class="t" style="left:176px;top:302px;font-weight:700;color:#999">Add Table</div>
<div class="t" style="left:176px;top:321px;font-weight:700;color:#999">Add View</div>
<div class="t" style="left:176px;top:340px;font-weight:700;color:#999">Add Inline Table</div>
<div class="t" style="left:176px;top:359px;font-weight:700;color:#333">Add Annotations</div>
<div class="t" style="left:176px;top:380px;font-weight:700;color:#333">Delete</div>
<svg style="left:0;top:0" width="400" height="400"><path d="M289.5 285.3v16.2l3.8-3.6l3 6.3l2.4-1.1l-2.9-6h5.4z" fill="#111" stroke="#fff" stroke-width="1.1" stroke-linejoin="round"/></svg>
</body></html>
